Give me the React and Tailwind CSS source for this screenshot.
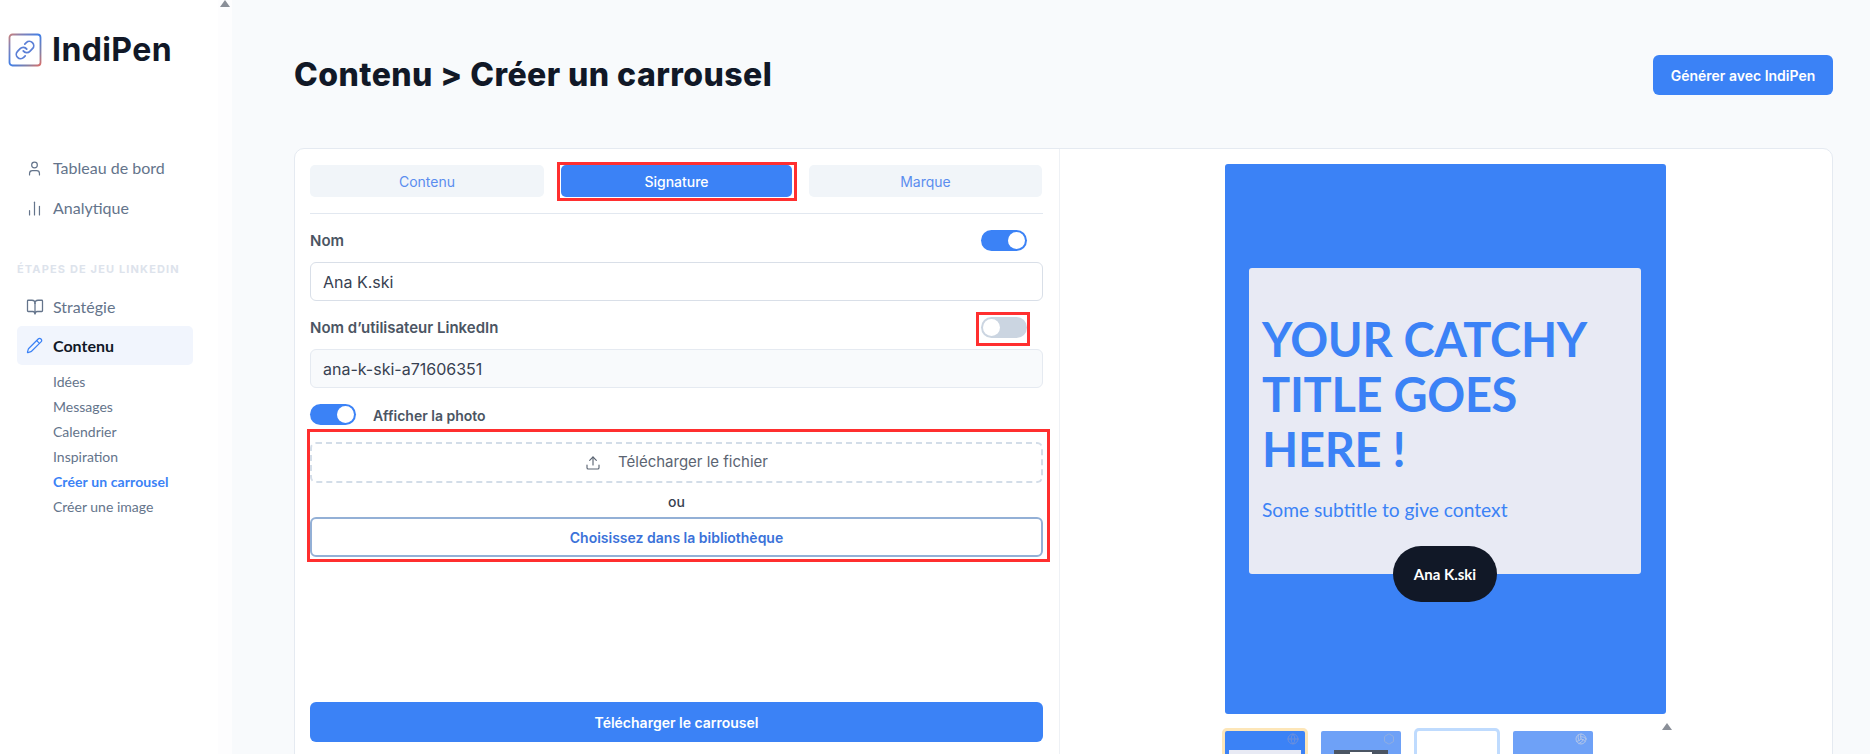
import { User, ChartNoAxesColumn, BookOpen, Pencil, Upload, Globe, Hexagon, Volleyball } from "lucide-react";

const sousMenu = ["Idées", "Messages", "Calendrier", "Inspiration", "Créer un carrousel", "Créer une image"];

function Logo() {
  return (
    <svg width="34" height="34" viewBox="0 0 34 34" fill="none">
      <defs>
        <linearGradient id="cadre" gradientUnits="userSpaceOnUse" x1="0" y1="0" x2="34" y2="34">
          <stop offset="0" stopColor="#d9806f" />
          <stop offset="0.2" stopColor="#8a82b0" />
          <stop offset="0.5" stopColor="#3f7fe8" />
          <stop offset="0.78" stopColor="#8a80a0" />
          <stop offset="1" stopColor="#ef6a5c" />
        </linearGradient>
      </defs>
      <rect x="1.5" y="1.5" width="31" height="31" rx="3" stroke="url(#cadre)" strokeWidth="1.8" />
      <g transform="translate(6.5 6.5) scale(0.875)" stroke="#5b7fd6" strokeWidth="2" strokeLinecap="round" strokeLinejoin="round">
        <path d="M10 13a5 5 0 0 0 7.54.54l3-3a5 5 0 0 0-7.07-7.07l-1.72 1.71" />
        <path d="M14 11a5 5 0 0 0-7.54-.54l-3 3a5 5 0 0 0 7.07 7.07l1.71-1.71" />
      </g>
    </svg>
  );
}

function Toggle({ actif }) {
  return (
    <div className={`flex h-[21px] w-[46px] shrink-0 items-center rounded-full p-[2px] ${actif ? "justify-end bg-[#3b82f6]" : "justify-start bg-[#cbd5e1]"}`}>
      <span className="h-[17px] w-[17px] rounded-full bg-white"></span>
    </div>
  );
}

function Cadre({ className }) {
  return <span className={`absolute border-[3px] border-[#ff2f2f] ${className}`}></span>;
}

function Fleche() {
  return <span className="block h-0 w-0 border-x-[5px] border-b-[7px] border-x-transparent border-b-[#8a8f98]"></span>;
}

function Sidebar() {
  return (
    <aside className="flex h-full w-[218px] shrink-0 flex-col bg-white font-['Lato',sans-serif]">
      <div className="flex items-center gap-[10px] pl-[8px] pt-[32px]">
        <Logo />
        <span className="font-['Inter',sans-serif] text-[32px] font-bold leading-[36px] tracking-[0.4px] text-[#111827]">IndiPen</span>
      </div>
      <nav className="mt-[88px] flex flex-col gap-[16px] pl-[26px] text-[16px] text-[#64748b]">
        <div className="flex h-[24px] items-center gap-[10px]">
          <User size={17} strokeWidth={1.7} />
          <span>Tableau de bord</span>
        </div>
        <div className="flex h-[24px] items-center gap-[10px]">
          <ChartNoAxesColumn size={17} strokeWidth={1.7} />
          <span>Analytique</span>
        </div>
      </nav>
      <p className="ml-[17px] mt-[42px] font-['Inter',sans-serif] text-[11px] font-bold leading-[14px] tracking-[1.15px] text-[#dde3ec]">ÉTAPES DE JEU LINKEDIN</p>
      <div className="mt-[19px] flex h-[24px] items-center gap-[9px] pl-[26px] text-[16px] text-[#64748b]">
        <BookOpen size={18} strokeWidth={1.7} />
        <span>Stratégie</span>
      </div>
      <div className="ml-[17px] mt-[7px] flex h-[39px] w-[176px] items-center gap-[10px] rounded-[5px] bg-[#f1f5fd] pl-[9px] text-[16px] font-bold text-[#111827]">
        <Pencil size={17} strokeWidth={1.7} className="text-[#3b82f6]" />
        <span>Contenu</span>
      </div>
      <ul className="mt-[4px] flex flex-col pl-[53px] text-[14px] leading-[25px] text-[#64748b]">
        {sousMenu.map((item) => (
          <li key={item} className={item === "Créer un carrousel" ? "font-bold tracking-[0.1px] text-[#3b82f6]" : ""}>
            {item}
          </li>
        ))}
      </ul>
    </aside>
  );
}

function Vignette({ fond, anneau, children }) {
  return <div className={`relative h-[40px] w-[80px] shrink-0 overflow-hidden rounded-t-[2px] ${fond} ${anneau}`}>{children}</div>;
}

export default function App() {
  return (
    <div className="flex h-[754px] w-full overflow-hidden bg-[#f8fafc] font-['Inter',sans-serif]">
      <Sidebar />
      <div className="h-full w-[14px] shrink-0 bg-[#fdfdfe] pl-[2px]">
        <Fleche />
      </div>

      <main className="min-w-0 flex-1 pl-[62px] pr-[37px]">
        <header className="flex h-[148px] items-start justify-between">
          <h1 className="mt-[53px] text-[32px] font-extrabold leading-[44px] tracking-[0.45px] text-[#111827]">Contenu &gt; Créer un carrousel</h1>
          <button className="mt-[55px] h-[40px] w-[180px] rounded-[6px] bg-[#3b82f6] text-[14px] font-semibold text-white">Générer avec IndiPen</button>
        </header>

        <section className="flex h-[640px] rounded-[10px] border border-[#e5eaf1] bg-white">
          <div className="flex w-[765px] shrink-0 flex-col border-r border-[#eef1f5] pl-[15px] pr-[16px] pt-[16px]">
            <div className="flex gap-[17px] pr-[1px] text-[14px]">
              <button className="h-[32px] w-[234px] rounded-[5px] bg-[#f1f5f9] text-[#5b8def]">Contenu</button>
              <button className="relative h-[32px] w-[231px] rounded-[5px] bg-[#3b82f6] font-medium text-white">
                Signature
                <Cadre className="-left-[4px] -right-[5px] -top-[3px] -bottom-[4px]" />
              </button>
              <button className="h-[32px] flex-1 rounded-[5px] bg-[#f1f5f9] text-[#5b8def]">Marque</button>
            </div>
            <div className="mt-[16px] border-t border-[#e2e8f0]"></div>

            <div className="mt-[16px] flex items-center justify-between pr-[16px]">
              <label className="text-[15px] font-semibold leading-[21px] text-[#4b5563]">Nom</label>
              <Toggle actif />
            </div>
            <div className="mt-[11px] flex h-[39px] items-center rounded-[6px] border border-[#d9dfe8] bg-white px-[12px] text-[16px] text-[#374151]">Ana K.ski</div>

            <div className="mt-[16px] flex items-center justify-between pr-[16px]">
              <label className="text-[15px] font-semibold leading-[21px] text-[#4b5563]">Nom d’utilisateur LinkedIn</label>
              <div className="relative">
                <Toggle />
                <Cadre className="-left-[5px] -right-[3px] -top-[5px] -bottom-[8px]" />
              </div>
            </div>
            <div className="mt-[11px] flex h-[39px] items-center rounded-[6px] border border-[#e5eaf1] bg-[#f8fafc] px-[12px] text-[16px] text-[#374151]">ana-k-ski-a71606351</div>

            <div className="mt-[16px] flex items-center gap-[17px]">
              <Toggle actif />
              <label className="pt-[2px] text-[14px] font-semibold leading-[19px] text-[#4b5563]">Afficher la photo</label>
            </div>

            <div className="relative mt-[17px]">
              <Cadre className="-left-[3px] -right-[7px] -top-[13px] -bottom-[5px]" />
              <div className="flex h-[41px] items-center justify-center gap-[17px] rounded-[6px] border-2 border-dashed border-[#d3dde8] text-[15px] text-[#5b6472]">
                <Upload size={16} strokeWidth={1.7} />
                <span>Télécharger le fichier</span>
              </div>
              <p className="flex h-[34px] items-center justify-center pt-[3px] text-[14px] font-medium text-[#374151]">ou</p>
              <button className="h-[40px] w-full rounded-[6px] border-2 border-[#93b0d6] bg-white pt-[1px] text-[14px] font-semibold text-[#3b72d9]">Choisissez dans la bibliothèque</button>
            </div>

            <button className="mt-[145px] h-[40px] w-full rounded-[6px] bg-[#3b82f6] text-[14px] font-semibold text-white">Télécharger le carrousel</button>
          </div>

          <div className="flex flex-1 flex-col pl-[165px] pt-[15px]">
            <div className="relative flex h-[550px] w-[441px] items-start rounded-[3px] bg-[#3b82f6] pl-[24px] pt-[104px] font-['Lato',sans-serif]">
              <div className="h-[306px] w-[392px] rounded-[3px] bg-[#e8eaf4] pl-[13px] pt-[44px] text-[#3b82f6]">
                <h2 className="text-[47px] font-bold leading-[55px] tracking-[-0.3px]">YOUR CATCHY TITLE GOES HERE !</h2>
                <p className="mt-[19px] text-[19.2px] leading-[28px]">Some subtitle to give context</p>
              </div>
              <div className="absolute left-[168px] top-[382px] flex h-[56px] w-[104px] items-center justify-center rounded-full bg-[#111827] text-[15px] font-bold text-white">Ana K.ski</div>
            </div>

            <div className="mt-[17px] flex gap-[16px]">
              <Vignette fond="bg-[#3b82f6]" anneau="ring-[3px] ring-[#fde6b8]">
                <Globe size={12} className="absolute right-[6px] top-[2px] text-[#6b8fdc]" />
                <div className="mx-auto mt-[19px] h-[30px] w-[72px] bg-[#e8eaf4]"></div>
              </Vignette>
              <Vignette fond="bg-[#6ea1f7]" anneau="">
                <Hexagon size={12} className="absolute right-[6px] top-[2px] text-[#90aee0]" />
                <div className="mx-auto mt-[19px] flex h-[30px] w-[54px] justify-center bg-[#4b5563] pt-[2px]">
                  <span className="h-[2px] w-[22px] bg-white"></span>
                </div>
              </Vignette>
              <Vignette fond="bg-white" anneau="ring-[3px] ring-[#bfdbfe]" />
              <Vignette fond="bg-[#6ea1f7]" anneau="">
                <Volleyball size={12} className="absolute right-[6px] top-[2px] text-[#b0c4e8]" />
              </Vignette>
              <div className="ml-[53px] -mt-[8px] w-[10px]">
                <Fleche />
              </div>
            </div>
          </div>
        </section>
      </main>
    </div>
  );
}
